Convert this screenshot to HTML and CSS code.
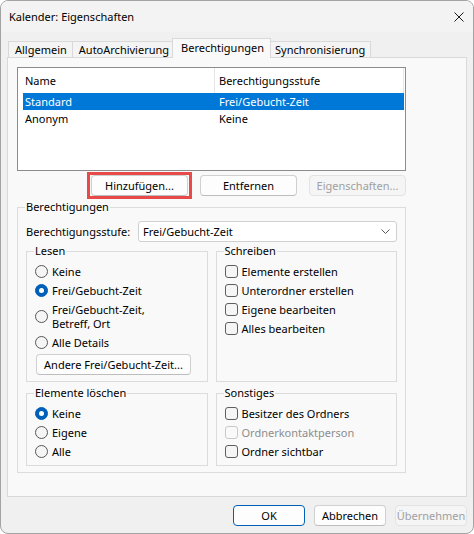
FILE: index.html
```html
<!DOCTYPE html>
<html lang="de">
<head>
<meta charset="utf-8">
<title>Kalender: Eigenschaften</title>
<link rel="stylesheet" href="styles.css">
</head>
<body>
<div class="window">
  <div class="titlebar">
    <span class="title">Kalender: Eigenschaften</span>
    <svg class="close" width="10" height="10" viewBox="0 0 10 10"><path d="M0.5 0.5 L9.5 9.5 M9.5 0.5 L0.5 9.5" stroke="#1b1b1b" stroke-width="1" fill="none"/></svg>
  </div>
  <div class="tabs">
    <div class="tab">Allgemein</div>
    <div class="tab">AutoArchivierung</div>
    <div class="tab active">Berechtigungen</div>
    <div class="tab">Synchronisierung</div>
  </div>
  <div class="panel">
    <div class="list">
      <div class="list-head">
        <div class="hcol1">Name</div>
        <div class="hcol2">Berechtigungsstufe</div>
      </div>
      <div class="row selected"><div class="c1">Standard</div><div class="c2">Frei/Gebucht-Zeit</div></div>
      <div class="row"><div class="c1">Anonym</div><div class="c2">Keine</div></div>
    </div>
    <div class="btnrow">
      <button class="btn wide mark">Hinzufügen...</button>
      <button class="btn wide">Entfernen</button>
      <button class="btn wide" disabled>Eigenschaften...</button>
    </div>
    <fieldset class="grp outer">
      <legend>Berechtigungen</legend>
      <div class="level">
        <span>Berechtigungsstufe:</span>
        <div class="combo">
          <span>Frei/Gebucht-Zeit</span>
          <svg width="9" height="5" viewBox="0 0 9 5"><path d="M0.5 0.5 L4.5 4.5 L8.5 0.5" stroke="#5a5a5a" stroke-width="1" fill="none"/></svg>
        </div>
      </div>
      <div class="groups">
        <fieldset class="grp">
          <legend>Lesen</legend>
          <div class="opt"><span class="radio"></span>Keine</div>
          <div class="opt"><span class="radio on"></span>Frei/Gebucht-Zeit</div>
          <div class="opt tall"><span class="radio"></span><span class="two">Frei/Gebucht-Zeit,<br>Betreff, Ort</span></div>
          <div class="opt"><span class="radio"></span>Alle Details</div>
          <button class="btn other">Andere Frei/Gebucht-Zeit...</button>
        </fieldset>
        <fieldset class="grp">
          <legend>Schreiben</legend>
          <div class="opt"><span class="check"></span>Elemente erstellen</div>
          <div class="opt"><span class="check"></span>Unterordner erstellen</div>
          <div class="opt"><span class="check"></span>Eigene bearbeiten</div>
          <div class="opt"><span class="check"></span>Alles bearbeiten</div>
        </fieldset>
        <fieldset class="grp small">
          <legend>Elemente löschen</legend>
          <div class="opt"><span class="radio on"></span>Keine</div>
          <div class="opt"><span class="radio"></span>Eigene</div>
          <div class="opt"><span class="radio"></span>Alle</div>
        </fieldset>
        <fieldset class="grp small">
          <legend>Sonstiges</legend>
          <div class="opt"><span class="check"></span>Besitzer des Ordners</div>
          <div class="opt disabled"><span class="check"></span>Ordnerkontaktperson</div>
          <div class="opt"><span class="check"></span>Ordner sichtbar</div>
        </fieldset>
      </div>
    </fieldset>
  </div>
  <div class="footer">
    <button class="btn foot default">OK</button>
    <button class="btn foot">Abbrechen</button>
    <button class="btn foot" disabled>Übernehmen</button>
  </div>
</div>
</body>
</html>
```
FILE: styles.css
```css
* { box-sizing: border-box; }
html, body { margin: 0; padding: 0; background: #ffffff; }
body {
  font-family: "Noto Sans", "Open Sans", sans-serif;
  font-size: 11px;
  color: #000;
}
.window {
  width: 474px;
  height: 534px;
  border: 1px solid #a3a3a3;
  border-radius: 8px;
  background: #f0f0f0;
  overflow: hidden;
  display: flex;
  flex-direction: column;
}
.titlebar {
  flex: none;
  height: 31px;
  display: flex;
  align-items: center;
  justify-content: space-between;
  padding: 0 9px 0 8px;
  background: #f3f3f3;
}
.title { font-size: 11px; line-height: 14px; }
.close { display: block; }

.tabs {
  flex: none;
  height: 26px;
  display: flex;
  align-items: flex-end;
  padding-left: 7px;
  margin-bottom: -1px;
  position: relative;
  z-index: 1;
}
.tab {
  height: 16px;
  margin-bottom: 1px;
  border: 1px solid #d9d9d9;
  border-bottom: none;
  padding: 0 5px 0 6px;
  line-height: 15px;
  background: #f4f4f4;
}
.tab + .tab { margin-left: -1px; }
.tab.active {
  height: 20px;
  margin: 0 -2px 0 -3px;
  padding: 0 6px 0 8px;
  line-height: 17px;
  background: #f9f9f9;
  position: relative;
  z-index: 2;
}

.panel {
  flex: none;
  height: 440px;
  margin: 0 6px;
  border: 1px solid #d9d9d9;
  background: #f9f9f9;
  padding: 9px;
}

.list {
  width: 389px;
  height: 104px;
  border: 1px solid #8c8c8c;
  background: #fff;
}
.list-head {
  display: flex;
  height: 25px;
  align-items: center;
}
.hcol1 {
  width: 197px;
  height: 100%;
  padding-left: 7px;
  border-right: 1px solid #e5e5e5;
  display: flex;
  align-items: center;
}
.hcol2 {
  flex: 1;
  height: 100%;
  margin-right: 1px;
  padding-left: 4px;
  border-right: 1px solid #e5e5e5;
  display: flex;
  align-items: center;
}
.row {
  display: flex;
  height: 17px;
  margin: 0 1px 0 5px;
  align-items: center;
}
.row.selected { background: #0078d7; color: #fff; }
.row .c1 { width: 192px; padding-left: 2px; }
.row .c2 { padding-left: 4px; }

.btnrow {
  width: 389px;
  display: flex;
  justify-content: flex-end;
  gap: 12px;
  margin-top: 4px;
}
.btn {
  font: inherit;
  color: #000;
  height: 21px;
  padding: 0;
  border: 1px solid #d0d0d0;
  border-bottom-color: #bdbdbd;
  border-radius: 4px;
  background: #fdfdfd;
  position: relative;
  line-height: 17px;
}
.btn:disabled {
  color: #a0a0a0;
  background: #f5f5f5;
  border-color: #e3e3e3;
}
.btn.wide { width: 97px; }
.btn.mark::after {
  content: "";
  position: absolute;
  left: -5px;
  right: -5px;
  top: -4px;
  bottom: -4px;
  border: 3px solid #e84a4a;
}

.grp {
  margin: 0;
  min-width: 0;
  border: 1px solid #dcdcdc;
  padding: 4px 8px 0 8px;
}
.grp legend {
  padding: 0 1px;
  margin-left: -1px;
  line-height: 14px;
}
.outer {
  width: 389px;
  margin-top: 4px;
  padding: 7px 8px 6px 8px;
}
.level {
  display: flex;
  align-items: center;
  height: 21px;
}
.combo {
  margin-left: auto;
  width: 259px;
  height: 21px;
  border: 1px solid #d0d0d0;
  border-radius: 3px;
  background: #fff;
  display: flex;
  align-items: center;
  justify-content: space-between;
  padding: 0 6px 0 4px;
}
.combo svg { display: block; }
.groups {
  margin-top: 2px;
  display: grid;
  grid-template-columns: 1fr 1fr;
  column-gap: 8px;
  row-gap: 4px;
}
.groups .grp { padding-bottom: 6px; }
.groups .grp.small { padding-bottom: 4px; }

.opt {
  display: flex;
  align-items: center;
  gap: 4px;
  height: 19px;
}
.opt.tall { height: 33px; }
.two { line-height: 14px; }
.opt.disabled { color: #8d8d8d; }

.radio {
  flex: none;
  width: 13px;
  height: 13px;
  border: 1px solid #575757;
  border-radius: 50%;
  background: #f5f5f5;
  display: flex;
  align-items: center;
  justify-content: center;
}
.radio.on {
  background: #005fb8;
  border-color: #005fb8;
}
.radio.on::after {
  content: "";
  width: 5px;
  height: 5px;
  border-radius: 50%;
  background: #fff;
}
.check {
  flex: none;
  width: 13px;
  height: 13px;
  border: 1px solid #5e5e5e;
  border-radius: 3px;
  background: #f5f5f5;
}
.opt.disabled .check { border-color: #c9c9c9; background: #f9f9f9; }

.btn.other {
  display: block;
  width: 155px;
  margin: 2px 0 0 1px;
}

.footer {
  flex: none;
  display: flex;
  justify-content: flex-end;
  gap: 9px;
  padding: 8px 6px 0 0;
}
.btn.foot { width: 72px; }
.btn.default { border-color: #005fb8; }
```
